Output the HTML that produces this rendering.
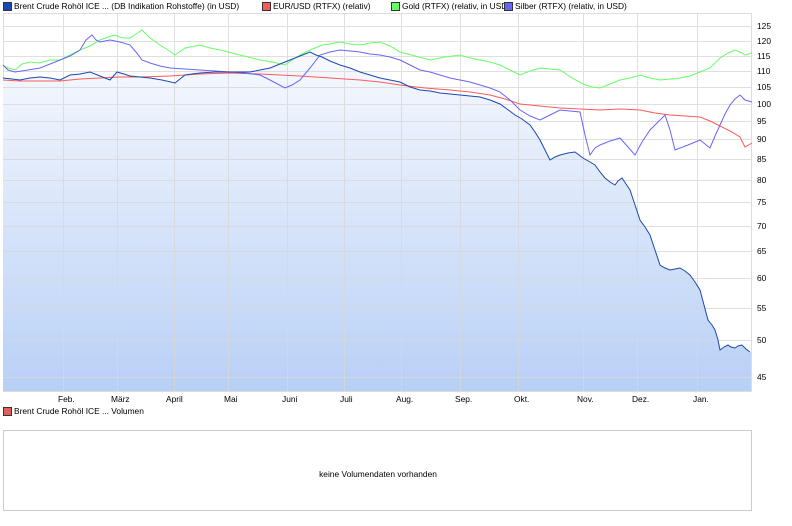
<!DOCTYPE html>
<html><head><meta charset="utf-8"><style>
body{margin:0;width:792px;height:526px;background:#fff;font-family:"Liberation Sans",sans-serif;font-size:8.4px;color:#000;overflow:hidden;position:relative}
.t{position:absolute;white-space:nowrap;line-height:10px}
.sq{position:absolute;width:7px;height:7px;border:1px solid #333}
</style></head><body>
<div class="sq" style="left:3px;top:2px;background:#1a48b0"></div><div class="t" style="left:14px;top:1px">Brent Crude Rohöl ICE ... (DB Indikation Rohstoffe) (in USD)</div>
<div class="sq" style="left:262px;top:2px;background:#ff5a5a"></div><div class="t" style="left:273px;top:1px">EUR/USD (RTFX) (relativ)</div>
<div class="sq" style="left:391px;top:2px;background:#66ff66"></div><div class="t" style="left:402px;top:1px">Gold (RTFX) (relativ, in USD)</div>
<div class="sq" style="left:504px;top:2px;background:#6666ff"></div><div class="t" style="left:515px;top:1px">Silber (RTFX) (relativ, in USD)</div>
<svg style="position:absolute;left:0;top:0" width="792" height="420">
<defs><linearGradient id="g" x1="0" y1="0" x2="0" y2="1"><stop offset="0" stop-color="#f7f9fe"/><stop offset="1" stop-color="#b8d0f6"/></linearGradient></defs>
<rect x="3.5" y="13.5" width="748" height="378" fill="#fff" stroke="#ddd"/>
<polygon fill="url(#g)" points="3,78 20,80 40,77 60,80 70,75 90,72 110,80 117,72 130,76 150,78 175,83 185,75 200,73 230,72 250,72 270,68 290,60 310,52 322,57 340,65 360,72 380,78 400,82 420,90 440,93 460,95 480,97 500,104 515,115 530,125 540,140 550,160 560,155 575,152 583,158 595,165 605,178 615,185 622,178 630,190 640,220 650,235 660,265 670,270 680,268 690,275 700,290 708,320 715,330 720,350 728,345 735,348 742,345 750,352 751,352 751,391 3,391"/>
<g stroke="#d8d8d8" stroke-width="1" opacity="0.8">
<line x1="63.5" y1="13" x2="63.5" y2="391"/><line x1="117.5" y1="13" x2="117.5" y2="391"/><line x1="174.5" y1="13" x2="174.5" y2="391"/><line x1="228.5" y1="13" x2="228.5" y2="391"/><line x1="287.5" y1="13" x2="287.5" y2="391"/><line x1="344.5" y1="13" x2="344.5" y2="391"/><line x1="401.5" y1="13" x2="401.5" y2="391"/><line x1="460.5" y1="13" x2="460.5" y2="391"/><line x1="518.5" y1="13" x2="518.5" y2="391"/><line x1="583.5" y1="13" x2="583.5" y2="391"/><line x1="637.5" y1="13" x2="637.5" y2="391"/><line x1="697.5" y1="13" x2="697.5" y2="391"/>
<line x1="3" y1="26.5" x2="751" y2="26.5"/><line x1="3" y1="41.5" x2="751" y2="41.5"/><line x1="3" y1="56.5" x2="751" y2="56.5"/><line x1="3" y1="71.5" x2="751" y2="71.5"/><line x1="3" y1="87.5" x2="751" y2="87.5"/><line x1="3" y1="104.5" x2="751" y2="104.5"/><line x1="3" y1="121.5" x2="751" y2="121.5"/><line x1="3" y1="139.5" x2="751" y2="139.5"/><line x1="3" y1="159.5" x2="751" y2="159.5"/><line x1="3" y1="180.5" x2="751" y2="180.5"/><line x1="3" y1="202.5" x2="751" y2="202.5"/><line x1="3" y1="226.5" x2="751" y2="226.5"/><line x1="3" y1="251.5" x2="751" y2="251.5"/><line x1="3" y1="278.5" x2="751" y2="278.5"/><line x1="3" y1="308.5" x2="751" y2="308.5"/><line x1="3" y1="340.5" x2="751" y2="340.5"/><line x1="3" y1="377.5" x2="751" y2="377.5"/>
</g>
<g fill="none" stroke-width="1">
<polyline stroke="#66ff66" points="3,65 8,68 15,70 22,64 30,62 40,63 50,60 60,60 70,55 80,50 90,46 100,40 108,37 115,35 122,38 130,38 136,34 142,30 150,38 160,45 168,50 175,55 185,48 200,45 210,48 220,50 240,55 260,60 272,62 285,65 292,60 300,55 310,50 322,45 330,44 340,42 350,44 360,45 370,43 380,42 390,46 400,52 415,56 430,60 445,57 460,55 470,58 480,60 490,62 500,65 510,70 520,75 530,71 540,68 550,69 560,70 572,78 585,85 592,87 600,88 610,84 620,80 630,78 640,75 650,78 660,80 670,79 680,78 690,76 700,72 710,68 720,58 728,53 735,50 740,52 745,55 752,53"/>
<polyline stroke="#ff5a5a" points="3,80 20,81 40,81 60,81 80,79 100,78 120,77 140,77 170,76 200,74 230,73 260,74 300,76 330,78 360,80 380,82 400,85 425,88 450,90 470,92 490,95 505,99 520,104 540,106 560,108 580,109 600,110 620,109 640,110 655,113 670,115 685,116 700,117 710,121 720,126 730,131 740,137 745,147 752,143"/>
<polyline stroke="#6666ff" points="3,65 8,70 15,72 28,70 40,68 50,64 60,60 70,56 80,50 86,40 92,35 96,40 100,42 110,40 120,42 130,45 136,52 142,60 150,63 160,66 170,68 185,69 200,70 215,71 230,72 245,73 260,75 270,80 285,88 292,85 300,80 310,68 320,55 330,52 340,50 350,51 360,52 370,54 380,55 390,57 400,60 410,65 420,70 430,72 440,75 450,78 460,80 470,82 480,85 490,88 500,92 510,100 520,110 530,116 540,120 550,115 560,110 570,111 580,112 585,135 590,155 595,148 600,145 610,141 620,138 628,147 635,155 642,142 650,130 658,122 665,115 670,130 675,150 688,145 700,140 705,144 710,148 715,136 720,125 725,114 730,105 735,99 740,95 745,100 752,102"/>
<polyline stroke="#1a48b0" points="3,78 12,79 20,80 30,78 40,77 50,78 60,80 70,75 80,74 90,72 100,76 110,80 117,72 124,74 130,76 140,77 150,78 162,80 175,83 185,75 192,74 200,73 215,72 230,72 240,72 250,72 260,70 270,68 280,64 290,60 300,56 310,52 316,55 322,57 330,61 340,65 350,68 360,72 370,75 380,78 390,80 400,82 410,87 420,90 430,91 440,93 450,94 460,95 470,96 480,97 490,100 500,104 507,109 515,115 522,119 530,125 535,132 540,140 545,150 550,160 555,157 560,155 568,153 575,152 579,155 583,158 590,162 595,165 600,172 605,178 610,182 615,185 618,181 622,178 626,184 630,190 635,205 640,220 645,227 650,235 655,250 660,265 665,268 670,270 675,269 680,268 685,271 690,275 695,282 700,290 704,305 708,320 712,325 715,330 718,340 720,350 724,347 728,345 731,347 735,348 738,346 742,345 746,349 750,352"/>
</g>
</svg>
<div class="t" style="left:757px;top:21px">125</div><div class="t" style="left:757px;top:36px">120</div><div class="t" style="left:757px;top:51px">115</div><div class="t" style="left:757px;top:66px">110</div><div class="t" style="left:757px;top:82px">105</div><div class="t" style="left:757px;top:99px">100</div><div class="t" style="left:757px;top:116px">95</div><div class="t" style="left:757px;top:134px">90</div><div class="t" style="left:757px;top:154px">85</div><div class="t" style="left:757px;top:175px">80</div><div class="t" style="left:757px;top:197px">75</div><div class="t" style="left:757px;top:221px">70</div><div class="t" style="left:757px;top:246px">65</div><div class="t" style="left:757px;top:273px">60</div><div class="t" style="left:757px;top:303px">55</div><div class="t" style="left:757px;top:335px">50</div><div class="t" style="left:757px;top:372px">45</div>
<div class="t" style="left:58px;top:394px">Feb.</div><div class="t" style="left:111px;top:394px">März</div><div class="t" style="left:166px;top:394px">April</div><div class="t" style="left:224px;top:394px">Mai</div><div class="t" style="left:282px;top:394px">Juni</div><div class="t" style="left:340px;top:394px">Juli</div><div class="t" style="left:396px;top:394px">Aug.</div><div class="t" style="left:455px;top:394px">Sep.</div><div class="t" style="left:514px;top:394px">Okt.</div><div class="t" style="left:577px;top:394px">Nov.</div><div class="t" style="left:632px;top:394px">Dez.</div><div class="t" style="left:693px;top:394px">Jan.</div>
<div class="sq" style="left:3px;top:407px;background:#e06060"></div><div class="t" style="left:14px;top:406px">Brent Crude Rohöl ICE ... Volumen</div>
<div style="position:absolute;left:3px;top:430px;width:747px;height:79px;border:1px solid #ccc"></div>
<div class="t" style="left:0;width:756px;text-align:center;top:469px">keine Volumendaten vorhanden</div>
</body></html>
